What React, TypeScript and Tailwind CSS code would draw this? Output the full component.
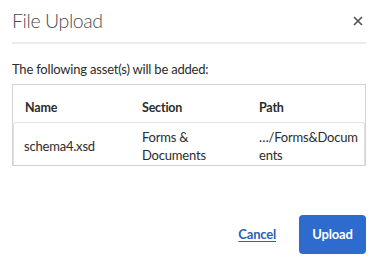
import React from "react";

const rows = [
  { name: "schema4.xsd", section: "Forms & Documents", path: "…/Forms&Documents" },
];

export default function App() {
  return (
    <div
      className="w-[376px] h-[266px] bg-white pl-3 pr-[10px] text-[#2c2c2c] tracking-[-0.2px]"
      style={{ fontFamily: "Lato, 'Open Sans', sans-serif" }}
    >
      {/* Header */}
      <div className="flex items-center justify-between h-[44px] border-b-2 border-[#ebebeb]">
        <h1 className="text-[19.5px] font-light text-[#4b4b4b] tracking-[-0.4px]">File Upload</h1>
        <button className="mr-[3px] text-[#505050]" aria-label="Close">
          <svg width="10" height="10" viewBox="0 0 10 10">
            <path d="M1 1L9 9M9 1L1 9" stroke="currentColor" strokeWidth="1.6" />
          </svg>
        </button>
      </div>

      <p className="mt-[15px] text-[13px] leading-5 text-[#2c2c2c]">
        The following asset(s) will be added:
      </p>

      {/* Asset table */}
      <div className="mt-[5px] w-[354px] border border-[#d3d3d3]">
        <div className="flex h-[37px] items-center pt-[9px] text-[12.5px] font-bold text-[#2c2c2c]">
          <div className="w-[117px] pl-3">Name</div>
          <div className="w-[117px] pl-3">Section</div>
          <div className="flex-1 pl-3">Path</div>
        </div>
        {rows.map((r) => (
          <div
            key={r.name}
            className="flex items-center h-[43px] pt-[3px] border border-b-0 border-[#e1e1e1] rounded-t-[3px] text-[13px] leading-[18px] text-[#2c2c2c]"
          >
            <div className="w-[116px] pl-[10px]">{r.name}</div>
            <div className="w-[117px] pl-3 pr-2">{r.section}</div>
            <div className="flex-1 pl-3 pr-0 break-all">{r.path}</div>
          </div>
        ))}
      </div>

      {/* Footer */}
      <div className="mt-[49px] flex items-center justify-end gap-[23px]">
        <button className="text-[13px] font-bold text-[#2b5fb8] underline underline-offset-2">
          Cancel
        </button>
        <button className="h-[39px] w-[67px] rounded-[4px] bg-[#2d6bcf] text-[13px] font-bold text-white">
          Upload
        </button>
      </div>
    </div>
  );
}
